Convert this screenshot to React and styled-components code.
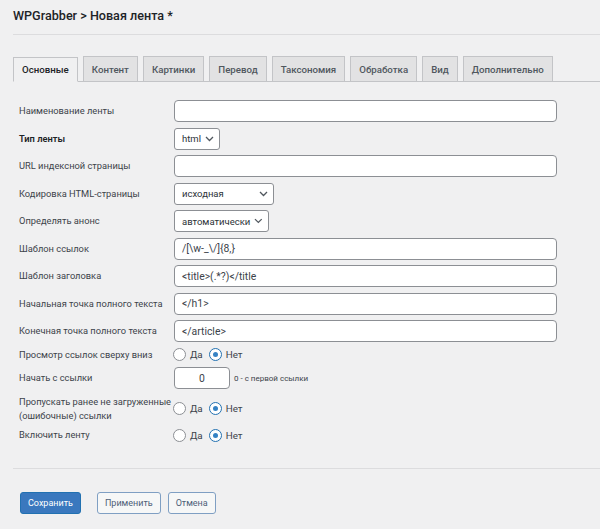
import React from "react";
import styled, { createGlobalStyle } from "styled-components";

const Global = createGlobalStyle`
	body {
		margin: 0;
		background: #f0f0f1;
		font-family: Roboto, "Noto Sans", sans-serif;
		color: #3c434a;
	}
`;

const Page = styled.div`
	padding: 0 0 0 13px;
	width: 587px;
	height: 529px;
	overflow: hidden;
`;

const Title = styled.h1`
	margin: 0;
	padding-top: 6px;
	height: 28px;
	font-size: 12.6px;
	line-height: 20px;
	font-weight: 500;
	color: #1d2327;
	border-bottom: 1px solid #dcdcde;
`;

const Tabs = styled.nav`
	display: flex;
	gap: 5px;
	margin-top: 21px;
	height: 25px;
	border-bottom: 1px solid #c3c4c7;
`;

const Tab = styled.div`
	box-sizing: border-box;
	height: 25px;
	padding: 0 8px;
	display: flex;
	align-items: center;
	font-size: 9.7px;
	font-weight: 500;
	border: 1px solid #c3c4c7;
	border-bottom: ${p => (p.$active ? "1px solid #f0f0f1" : "none")};
	background: ${p => (p.$active ? "#f0f0f1" : "#e2e2e3")};
	color: ${p => (p.$active ? "#1d2327" : "#50575e")};
	position: relative;
	top: ${p => (p.$active ? "1px" : "0")};
	white-space: nowrap;
`;

const Form = styled.div`
	display: grid;
	grid-template-columns: 155px 1fr;
	row-gap: 5.5px;
	padding: 18px 0 0 6px;
	align-items: center;
`;

const Label = styled.label`
	font-size: 9.3px;
	line-height: 14px;
	font-weight: ${p => (p.$bold ? 600 : 400)};
	color: ${p => (p.$bold ? "#1d2327" : "#3c434a")};
	white-space: nowrap;
`;

const Field = styled.div`
	display: flex;
	align-items: center;
	gap: 4px;
	min-height: 14px;
`;

const TextInput = styled.div`
	box-sizing: border-box;
	width: ${p => p.$w || "383px"};
	height: 22px;
	padding: 0 7px;
	border: 1px solid #8c8f94;
	border-radius: 4px;
	background: #fff;
	display: flex;
	align-items: center;
	justify-content: ${p => (p.$center ? "center" : "flex-start")};
	font-size: 10.4px;
	color: #3c434a;
	white-space: pre;
`;

const SelectBox = styled.div`
	box-sizing: border-box;
	width: ${p => p.$w};
	height: 22px;
	padding: 0 5px 0 7px;
	border: 1px solid #8c8f94;
	border-radius: 3px;
	background: #fff;
	display: flex;
	align-items: center;
	justify-content: space-between;
	gap: 4px;
	font-size: 9.5px;
	color: #2c3338;
	white-space: nowrap;
`;

const Hint = styled.span`
	font-size: 8px;
	color: #3c434a;
`;

const RadioGroup = styled.div`
	display: flex;
	align-items: center;
	gap: 4px;
	font-size: 9.8px;
	color: #3c434a;
`;

const Radio = styled.span`
	box-sizing: border-box;
	width: 13px;
	height: 13px;
	border-radius: 50%;
	border: 1px solid ${p => (p.$checked ? "#2271b1" : "#8c8f94")};
	background: #fff;
	display: inline-flex;
	align-items: center;
	justify-content: center;
	margin-left: ${p => (p.$first ? "-1px" : "2px")};
	&::after {
		content: "";
		width: 5px;
		height: 5px;
		border-radius: 50%;
		background: ${p => (p.$checked ? "#3582c4" : "transparent")};
	}
`;

const Divider = styled.div`
	margin-top: 26px;
	border-top: 1px solid #dcdcde;
`;

const Buttons = styled.div`
	display: flex;
	gap: 7px;
	padding: 23px 0 0 7px;
`;

const Button = styled.button`
	box-sizing: border-box;
	height: 22px;
	padding: 0 7px;
	margin-right: ${p => (p.$primary ? "9px" : "0")};
	border-radius: 3px;
	font-family: inherit;
	font-size: 9px;
	border: 1px solid ${p => (p.$primary ? "#2271b1" : "#7f9fc3")};
	background: ${p => (p.$primary ? "#3a78be" : "#f6f7f7")};
	color: ${p => (p.$primary ? "#fff" : "#4d6078")};
`;

const Chevron = () => (
	<svg width="9" height="6" viewBox="0 0 9 6" fill="none">
		<path d="M1 1l3.5 3.5L8 1" stroke="#50575e" strokeWidth="1.3" />
	</svg>
);

const YesNo = () => (
	<RadioGroup>
		<Radio $first />
		<span>Да</span>
		<Radio $checked />
		<span>Нет</span>
	</RadioGroup>
);

const tabs = ["Основные", "Контент", "Картинки", "Перевод", "Таксономия", "Обработка", "Вид", "Дополнительно"];

export default function App() {
	return (
		<Page>
			<Global />
			<Title>WPGrabber &gt; Новая лента *</Title>
			<Tabs>
				{tabs.map((t, i) => (
					<Tab key={t} $active={i === 0}>{t}</Tab>
				))}
			</Tabs>
			<Form>
				<Label>Наименование ленты</Label>
				<Field><TextInput /></Field>

				<Label $bold>Тип ленты</Label>
				<Field><SelectBox $w="46px"><span>html</span><Chevron /></SelectBox></Field>

				<Label>URL индексной страницы</Label>
				<Field><TextInput /></Field>

				<Label>Кодировка HTML-страницы</Label>
				<Field><SelectBox $w="100px"><span>исходная</span><Chevron /></SelectBox></Field>

				<Label>Определять анонс</Label>
				<Field><SelectBox $w="95px"><span>автоматически</span><Chevron /></SelectBox></Field>

				<Label>Шаблон ссылок</Label>
				<Field><TextInput>{"/[\\w-_\\/]{8,}"}</TextInput></Field>

				<Label>Шаблон заголовка</Label>
				<Field><TextInput>{"<title>(.*?)</title"}</TextInput></Field>

				<Label>Начальная точка полного текста</Label>
				<Field><TextInput>{"</h1>"}</TextInput></Field>

				<Label>Конечная точка полного текста</Label>
				<Field><TextInput>{"</article>"}</TextInput></Field>

				<Label>Просмотр ссылок сверху вниз</Label>
				<Field><YesNo /></Field>

				<Label>Начать с ссылки</Label>
				<Field>
					<TextInput $w="56px" $center>0</TextInput>
					<Hint>0 - с первой ссылки</Hint>
				</Field>

				<Label>Пропускать ранее не загруженные<br />(ошибочные) ссылки</Label>
				<Field><YesNo /></Field>

				<Label>Включить ленту</Label>
				<Field><YesNo /></Field>
			</Form>
			<Divider />
			<Buttons>
				<Button $primary>Сохранить</Button>
				<Button>Применить</Button>
				<Button>Отмена</Button>
			</Buttons>
		</Page>
	);
}
